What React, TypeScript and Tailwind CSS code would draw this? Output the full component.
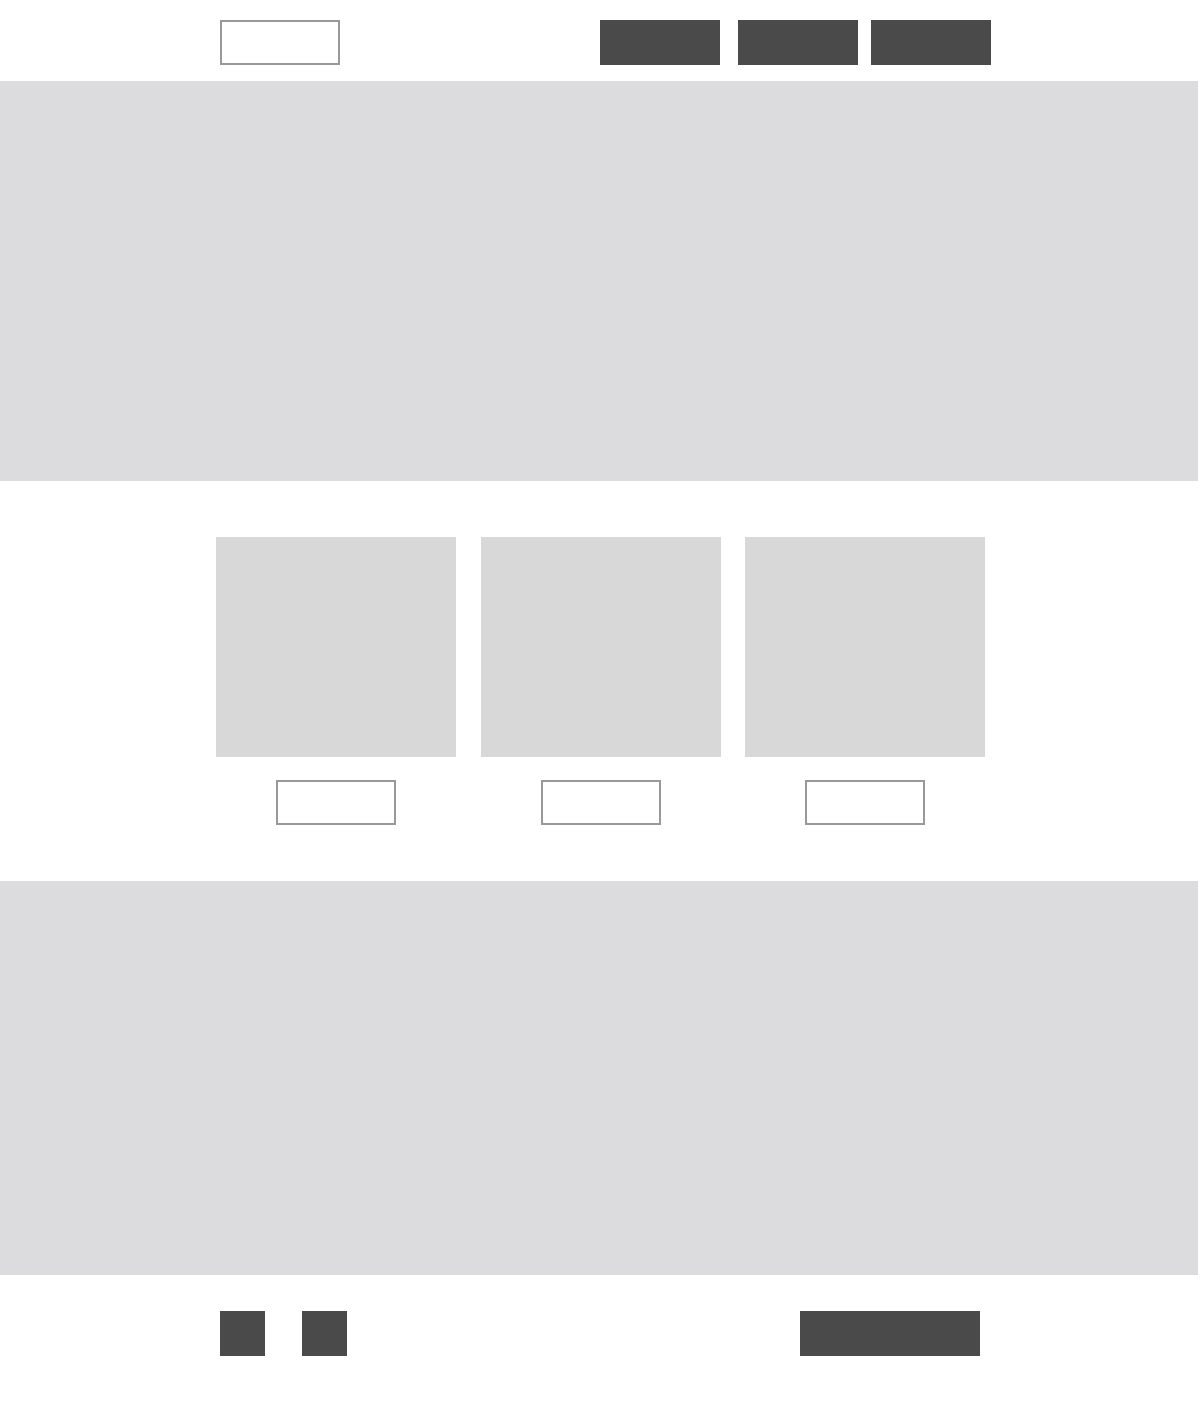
export default function App() {
  return (
    <main className="min-h-screen w-[1200px] bg-white font-['Liberation_Sans',sans-serif]">
      {/* ── Header ──────────────────────────────────────────── */}
      <header className="flex h-[81px] items-start pl-[220px] pt-5">
        <div className="h-[45px] w-[120px] border-2 border-[#999999] bg-white" />
        <nav className="ml-[260px] flex">
          <div className="h-[45px] w-[120px] bg-[#4a4a4a]" />
          <div className="ml-[18px] h-[45px] w-[120px] bg-[#4a4a4a]" />
          <div className="ml-[13px] h-[45px] w-[120px] bg-[#4a4a4a]" />
        </nav>
      </header>

      {/* ── Hero ────────────────────────────────────────────── */}
      <section className="h-[400px] w-[1198px] bg-[#dcdcde]" />

      {/* ── Cards ───────────────────────────────────────────── */}
      <section className="flex pb-14 pl-[216px] pt-14">
        {[0, 1, 2].map((i) => (
          <div
            key={i}
            className={`flex w-[240px] flex-col items-center ${i === 1 ? 'ml-[25px]' : i === 2 ? 'ml-6' : ''}`}
          >
            <div className="h-[220px] w-[240px] bg-[#d8d8d8]" />
            <div className="mt-[23px] h-[45px] w-[120px] border-2 border-[#999999] bg-white" />
          </div>
        ))}
      </section>

      {/* ── Banner ──────────────────────────────────────────── */}
      <section className="h-[394px] w-[1198px] bg-[#dcdcde]" />

      {/* ── Footer ──────────────────────────────────────────── */}
      <footer className="flex pb-[50px] pl-[220px] pt-9">
        <div className="h-[45px] w-[45px] bg-[#4a4a4a]" />
        <div className="ml-[37px] h-[45px] w-[45px] bg-[#4a4a4a]" />
        <div className="ml-[453px] h-[45px] w-[180px] bg-[#4a4a4a]" />
      </footer>
    </main>
  )
}
